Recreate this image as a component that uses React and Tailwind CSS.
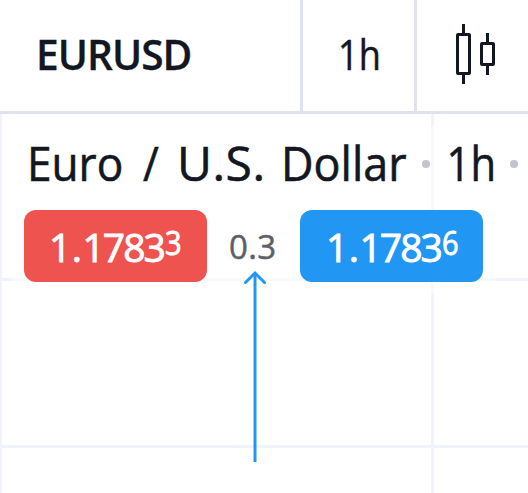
const font = "font-['Open_Sans','Noto_Sans',sans-serif]";

function Candles() {
  return (
    <svg className="mt-6 ml-[39px] h-[60px] w-[39px]" viewBox="0 0 39 60" fill="none" stroke="#131722" strokeWidth="3">
      <rect x="1.5" y="10.5" width="12" height="39" rx="0.5" />
      <path d="M7.5 0v9M7.5 51v9M31.5 9v9M31.5 42v9" />
      <rect x="25.5" y="19.5" width="12" height="21" rx="0.5" />
    </svg>
  );
}

function Quote({ whole, fraction, pip, className }) {
  return (
    <div className={`flex h-[72px] w-[183px] rounded-xl text-white [-webkit-text-stroke:0.9px_white] ${className}`}>
      <span className="w-[116px] text-[39px] leading-[73px] tracking-[-2px]">
        {whole}<span className="mx-[2.5px]">.</span>{fraction}
      </span>
      <span className="origin-left scale-x-[0.88] text-[33px] leading-[66px]">{pip}</span>
    </div>
  );
}

export default function App() {
  return (
    <div className={`relative flex h-[493px] w-[528px] flex-col overflow-hidden whitespace-nowrap bg-white text-[#131722] ${font}`}>
      <header className="flex h-[114px] shrink-0 border-b-[3px] border-[#e0e3eb]">
        <div className="w-[303px] border-r-[3px] border-[#e0e3eb] pl-[36px] text-[42px] leading-[107px] font-semibold [-webkit-text-stroke:0.3px_#131722]">
          <span className="inline-block origin-left scale-x-[0.968] tracking-[-1px]">EURUSD</span>
        </div>
        <div className="w-[114px] border-r-[3px] border-[#e0e3eb] pl-[35px] text-[42px] leading-[107px] [-webkit-text-stroke:0.5px_#131722]">
          <span className="inline-block origin-left scale-x-[0.86]">1h</span>
        </div>
        <Candles />
      </header>
      <main className="relative flex-1 border-l-2 border-[#f0f3fa]">
        <div className="absolute top-0 left-[429px] h-full w-[3px] bg-[#f0f3fa]" />
        <div className="absolute top-[164px] left-0 h-[3px] w-full bg-[#f0f3fa]" />
        <div className="absolute top-[331px] left-0 h-[3px] w-full bg-[#f0f3fa]" />
        <section className="relative ml-[10px] pt-3">
          <div className="absolute top-3 left-0 h-[72px] w-full bg-white/50" />
          <div className="absolute top-[84px] left-0 h-[96px] w-[483px] bg-white/50" />
          <h1 className="relative flex h-[84px] pl-[15px] text-[48px] leading-[74px] [-webkit-text-stroke:0.6px_#131722]">
            <span className="w-[116px] origin-left scale-x-[0.92]">Euro</span>
            <span className="w-[34px] origin-left scale-x-[0.9]">/</span>
            <span className="w-[104px] origin-left tracking-[0.5px]">U.S.</span>
            <span className="w-[141px] origin-left scale-x-[0.935]">Dollar</span>
            <span className="mt-[34px] size-2 rounded-full bg-[#c1c4cd]" />
            <span className="w-[80px] origin-left scale-x-[0.87] pl-[19px]">1h</span>
            <span className="mt-[34px] size-2 rounded-full bg-[#c1c4cd]" />
          </h1>
          <div className="relative flex pl-3">
            <Quote whole="1" fraction="1783" pip="3" className="bg-[#ef5350] pl-[25px]" />
            <span className="w-[93px] pl-[22px] text-[33px] leading-[73px] tracking-[0.4px] text-[#5d606b] [-webkit-text-stroke:0.5px_#5d606b]">0.3</span>
            <Quote whole="1" fraction="1783" pip="6" className="bg-[#2196f3] pl-[26px]" />
          </div>
        </section>
        <svg className="absolute top-[156px] left-[241px] h-[194px] w-6" viewBox="0 0 24 194" fill="none" stroke="#2196f3" strokeWidth="3">
          <path d="M12 3v189" />
          <path d="M2.5 12.5 12 3l9.5 9.5" strokeLinecap="round" />
        </svg>
      </main>
    </div>
  );
}
